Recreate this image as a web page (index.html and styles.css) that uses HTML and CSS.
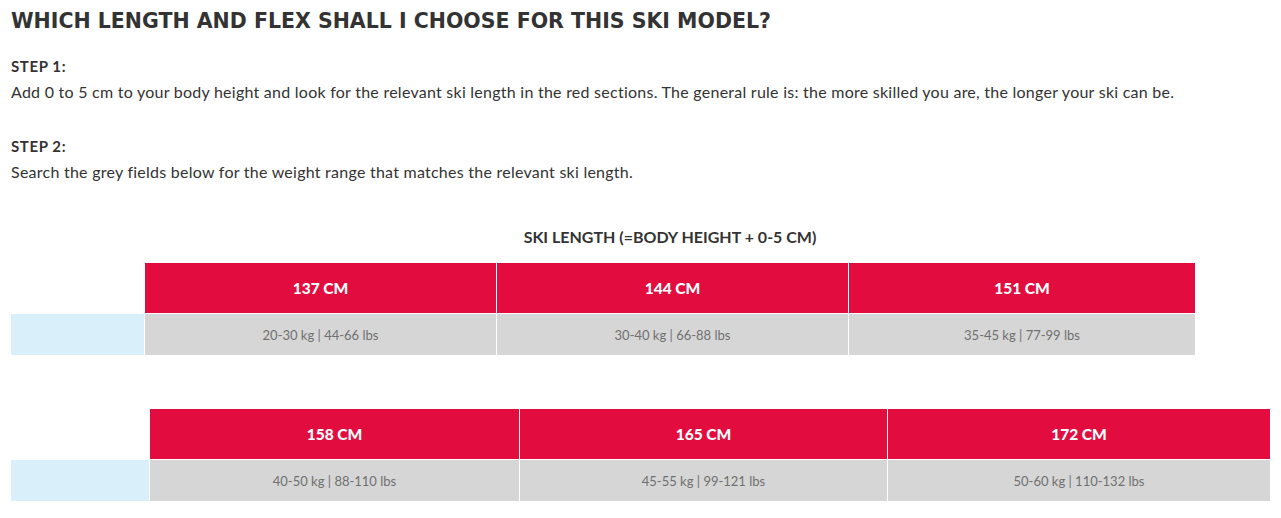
FILE: index.html
```html
<!DOCTYPE html>
<html lang="en">
<head>
<meta charset="utf-8">
<title>Ski length and flex</title>
<link rel="stylesheet" href="styles.css">
</head>
<body>
<main class="page">
  <h1 class="title">WHICH LENGTH AND FLEX SHALL I CHOOSE FOR THIS SKI MODEL?</h1>
  <section class="step">
    <h2 class="step-title">STEP 1:</h2>
    <p class="step-text">Add 0 to 5 cm to your body height and look for the relevant ski length in the red sections. The general rule is: the more skilled you are, the longer your ski can be.</p>
  </section>
  <section class="step">
    <h2 class="step-title">STEP 2:</h2>
    <p class="step-text">Search the grey fields below for the weight range that matches the relevant ski length.</p>
  </section>

  <div class="chart chart-a">
    <div class="chart-caption">SKI LENGTH (=BODY HEIGHT + 0-5 CM)</div>
    <div class="blank"></div>
    <div class="len">137 CM</div>
    <div class="len">144 CM</div>
    <div class="len">151 CM</div>
    <div class="label"></div>
    <div class="weight">20-30 kg | 44-66 lbs</div>
    <div class="weight">30-40 kg | 66-88 lbs</div>
    <div class="weight">35-45 kg | 77-99 lbs</div>
  </div>

  <div class="chart chart-b">
    <div class="blank"></div>
    <div class="len">158 CM</div>
    <div class="len">165 CM</div>
    <div class="len">172 CM</div>
    <div class="label"></div>
    <div class="weight">40-50 kg | 88-110 lbs</div>
    <div class="weight">45-55 kg | 99-121 lbs</div>
    <div class="weight">50-60 kg | 110-132 lbs</div>
  </div>
</main>
</body>
</html>
```
FILE: styles.css
```css
html, body {
  margin: 0;
  padding: 0;
  background: #fff;
}
body {
  font-family: Lato, "Open Sans", "Liberation Sans", sans-serif;
  color: #333;
}
.page {
  padding: 8px 11px 0;
}
.title {
  margin: 0;
  font-family: "DejaVu Sans", Lato, sans-serif;
  font-size: 20.5px;
  line-height: 26px;
  font-weight: 700;
  color: #333;
}
.step-title {
  margin: 22px 0 0;
  font-size: 15px;
  line-height: 20px;
  font-weight: 700;
  letter-spacing: 0.6px;
  color: #333;
}
.step + .step .step-title {
  margin-top: 33px;
}
.step-text {
  margin: 5px 0 0;
  font-size: 16px;
  line-height: 22px;
  letter-spacing: 0.25px;
  color: #333;
}
.chart {
  display: grid;
  column-gap: 1px;
  row-gap: 1px;
}
.chart-a {
  margin-top: 44px;
  grid-template-columns: 133px 351px 351px 346px;
}
.chart-b {
  margin-top: 54px;
  grid-template-columns: 138px 369px 367px 382px;
}
.chart-caption {
  grid-column: 2 / -1;
  text-align: center;
  font-size: 16px;
  font-weight: 700;
  line-height: 20px;
  padding-bottom: 15px;
  color: #333;
}
.len {
  background: #e30c3f;
  color: #fff;
  height: 50px;
  display: flex;
  align-items: center;
  justify-content: center;
  font-size: 15.5px;
  font-weight: 900;
}
.label {
  background: #d9f0fb;
  height: 41px;
}
.weight {
  background: #d6d6d6;
  color: #707070;
  height: 41px;
  display: flex;
  align-items: center;
  justify-content: center;
  font-size: 13px;
}
```
